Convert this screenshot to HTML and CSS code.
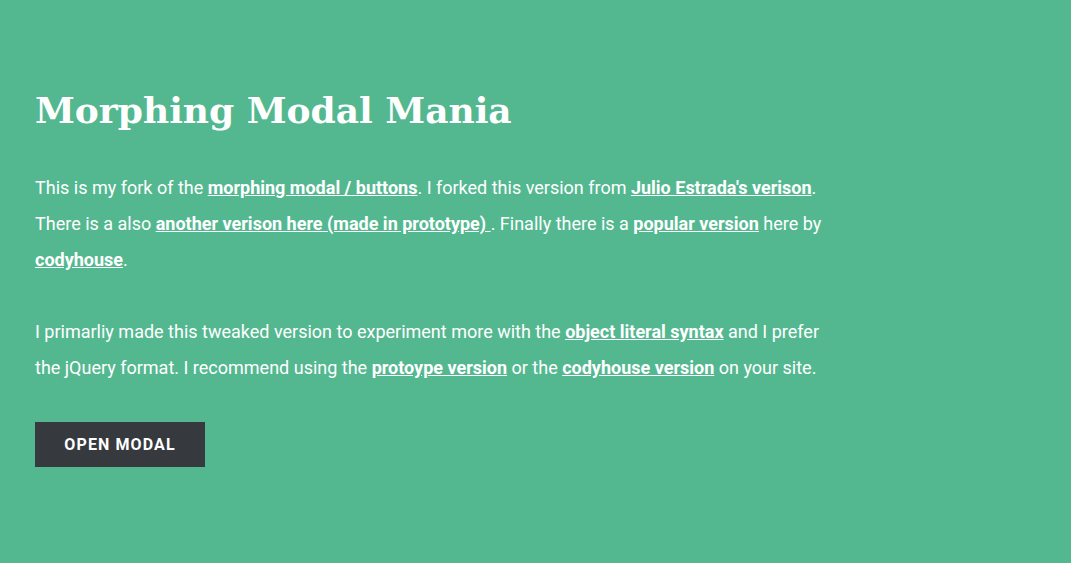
FILE: index.html
```html
<!DOCTYPE html>
<html lang="en">
<head>
<meta charset="utf-8">
<title>Morphing Modal Mania</title>
<link rel="stylesheet" href="styles.css">
</head>
<body>
<main class="page">
  <h1 class="title">Morphing Modal Mania</h1>
  <p class="text">This is my fork of the <a href="#">morphing modal / buttons</a>. I forked this version from <a href="#">Julio Estrada's verison</a>. There is a also <a href="#">another verison here (made in prototype) </a>. Finally there is a <a href="#">popular version</a> here by <a href="#">codyhouse</a>.</p>
  <p class="text">I primarliy made this tweaked version to experiment more with the <a href="#">object literal syntax</a> and I prefer the jQuery format. I recommend using the <a href="#">protoype version</a> or the <a href="#">codyhouse version</a> on your site.</p>
  <button class="btn" type="button">OPEN MODAL</button>
</main>
</body>
</html>
```
FILE: styles.css
```css
html, body {
  margin: 0;
  padding: 0;
}
body {
  background: #53b890;
  color: #ffffff;
  font-family: Roboto, "Liberation Sans", sans-serif;
  min-height: 563px;
}
.page {
  padding: 86px 35px 0 35px;
  max-width: 792px;
}
.title {
  font-family: "DejaVu Serif", "Liberation Serif", serif;
  font-weight: 700;
  font-size: 36px;
  line-height: 48px;
  margin: 0 0 36px 0;
}
.text {
  font-size: 18px;
  line-height: 36px;
  margin: 0 0 36px 0;
}
.text a {
  color: #ffffff;
  font-weight: 700;
  text-decoration: underline;
}
.btn {
  display: block;
  width: 170px;
  height: 45px;
  border: 0;
  background: #36393e;
  color: #ffffff;
  font-family: Roboto, "Liberation Sans", sans-serif;
  font-weight: 700;
  font-size: 16px;
  letter-spacing: 1.1px;
  margin-top: 0;
  padding: 0;
  cursor: pointer;
}
```
